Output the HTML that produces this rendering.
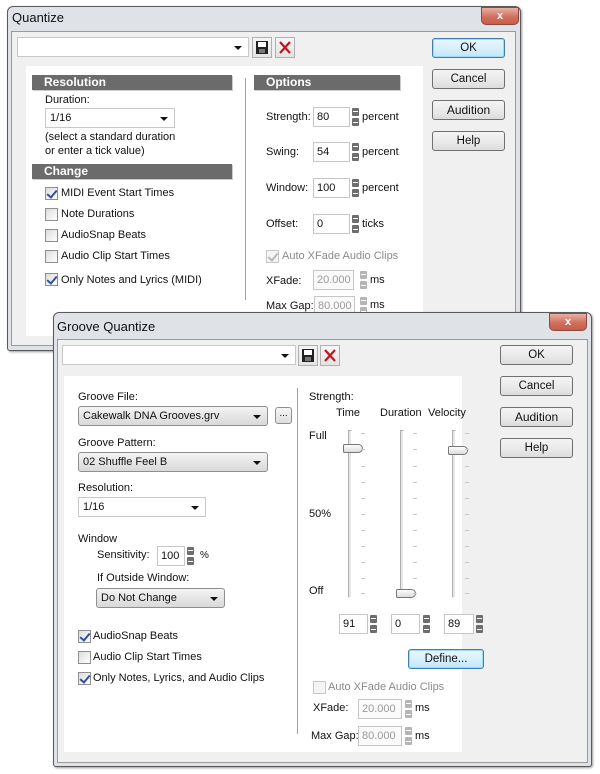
<!DOCTYPE html>
<html><head><meta charset="utf-8"><style>
*{margin:0;padding:0;box-sizing:border-box}
body{width:600px;height:774px;background:#fff;position:relative;overflow:hidden;font-family:"Liberation Sans",Arial,sans-serif;font-size:11px;color:#111}
.a{position:absolute}
.t{position:absolute;line-height:14px;white-space:nowrap}
.win{position:absolute;background:#dfe2e6;border:1px solid #5a5a5a;border-radius:6px 6px 3px 3px;box-shadow:1px 1px 2px rgba(0,0,0,.4)}
.title{position:absolute;font-size:13px;color:#111}
.body{position:absolute;background:#f0f0f0;border:1px solid #9a9a9a}
.panel{position:absolute;background:#fff}
.close{position:absolute;width:38px;height:18px;border:1px solid #8a4a40;border-radius:0 0 5px 5px;background:linear-gradient(#eab0a4,#d0705e 55%,#c75d48);color:#fff;font-size:11px;font-weight:bold;text-align:center;line-height:16px}
.combo{position:absolute;background:#fff;border:1px solid #c8c8c8;height:20px}
.combo .arr,.dd .arr{position:absolute;right:6px;top:8px;width:0;height:0;border-left:4px solid transparent;border-right:4px solid transparent;border-top:4px solid #111}
.dd{position:absolute;height:20px;border:1px solid #8e8f8f;border-radius:3px;background:linear-gradient(#f4f4f4,#e6e6e6 50%,#d9d9d9)}
.dd span,.combo span{position:absolute;left:4px;top:2px;line-height:14px}
.btn{position:absolute;height:20px;border:1px solid #707070;border-radius:3px;background:linear-gradient(#f4f4f4,#ebebeb 50%,#dcdcdc);text-align:center;line-height:18px;font-size:11.5px}
.btn.def{border-color:#3c7fb1;background:linear-gradient(#eaf6fd,#d9f0fc 50%,#bee6fd);box-shadow:inset 0 0 0 1px #9fd9f5}
.hdr{position:absolute;background:#6b6b6b;color:#fff;font-weight:bold;font-size:12px;line-height:15px;height:15px;padding-left:12px;box-shadow:1px 1px 0 #ccc}
.cb{position:absolute;width:13px;height:13px;border:1px solid #8f8f8f;background:linear-gradient(135deg,#dcdcdc,#fff)}
.cb.on::after{content:"";position:absolute;left:3px;top:0px;width:4px;height:8px;border:solid #3050a0;border-width:0 2px 2px 0;transform:rotate(40deg)}
.cb.dis{border-color:#c8c8c8;background:#f4f4f4}
.cb.dis.on::after{border-color:#b8b8b8}
.inp{position:absolute;height:20px;border:1px solid #c6c6c6;background:#fff;padding-left:3px;line-height:18px}
.inp.dis{color:#9a9a9a;background:#fafafa}
.spin{position:absolute;width:7px;height:18px}
.spin::before{content:"";position:absolute;left:0;top:0;width:7px;height:8px;background:#6e6e6e;border-radius:1px}
.spin::after{content:"";position:absolute;left:0;top:10px;width:7px;height:8px;background:#6e6e6e;border-radius:1px}
.spin i{position:absolute;left:1px;width:5px;height:1px;background:#fff;z-index:2}
.spin.dis::before,.spin.dis::after{background:#b5b5b5}
.vl{position:absolute;width:2px;border-left:1px solid #a0a0a0;border-right:1px solid #fff}
.track{position:absolute;width:4px;border:1px solid #b0b0b0;border-right-color:#fff;border-bottom-color:#fff;background:#e6e6e6}
.thumb{position:absolute;width:20px;height:9px;border:1px solid #777;border-radius:2px 5px 5px 2px;background:linear-gradient(#fdfdfd,#dcdcdc)}
.tick{position:absolute;width:4px;height:1px;background:#c8c8c8}
.ico{position:absolute;width:20px;height:21px;border:1px solid #b0b0b0;background:linear-gradient(#f6f6f6,#e4e4e4)}
</style></head><body>

<!-- ================= Quantize ================= -->
<div class="win" style="left:7px;top:6px;width:514px;height:345px"></div>
<div class="title" style="left:12px;top:10px">Quantize</div>
<div class="close" style="left:481px;top:7px">x</div>
<div class="body" style="left:11px;top:31px;width:505px;height:315px"></div>
<div class="panel" style="left:26px;top:66px;width:397px;height:270px"></div>

<div class="combo" style="left:17px;top:37px;width:232px"><div class="arr"></div></div>
<div class="ico" style="left:252px;top:37px"><svg width="18" height="19" viewBox="0 0 18 19"><rect x="3" y="3" width="12" height="13" fill="#222"/><rect x="5" y="4" width="8" height="5" fill="#fff"/><rect x="6" y="11" width="6" height="4" fill="#777"/></svg></div>
<div class="ico" style="left:275px;top:37px"><svg width="18" height="19" viewBox="0 0 18 19"><path d="M4 4L14 15M14 4L4 15" stroke="#c0141c" stroke-width="2.2"/></svg></div>

<div class="btn def" style="left:432px;top:38px;width:73px">OK</div>
<div class="btn" style="left:432px;top:69px;width:73px">Cancel</div>
<div class="btn" style="left:432px;top:100px;width:73px;font-size:12px">Audition</div>
<div class="btn" style="left:432px;top:131px;width:73px">Help</div>

<div class="hdr" style="left:32px;top:75px;width:200px">Resolution</div>
<div class="hdr" style="left:254px;top:75px;width:146px">Options</div>
<div class="vl" style="left:245px;top:78px;height:222px"></div>

<div class="t" style="left:45px;top:93px">Duration:</div>
<div class="combo" style="left:45px;top:108px;width:130px"><span>1/16</span><div class="arr"></div></div>
<div class="t" style="left:45px;top:130px">(select a standard duration</div>
<div class="t" style="left:45px;top:144px">or enter a tick value)</div>
<div class="hdr" style="left:32px;top:164px;width:200px">Change</div>
<div class="cb on" style="left:45px;top:187px"></div><div class="t" style="left:61px;top:186px">MIDI Event Start Times</div>
<div class="cb" style="left:45px;top:208px"></div><div class="t" style="left:61px;top:207px">Note Durations</div>
<div class="cb" style="left:45px;top:229px"></div><div class="t" style="left:61px;top:228px">AudioSnap Beats</div>
<div class="cb" style="left:45px;top:250px"></div><div class="t" style="left:61px;top:249px">Audio Clip Start Times</div>
<div class="cb on" style="left:45px;top:273px"></div><div class="t" style="left:61px;top:273px">Only Notes and Lyrics (MIDI)</div>

<div class="t" style="left:266px;top:110px">Strength:</div>
<div class="inp" style="left:313px;top:107px;width:37px">80</div><div class="spin" style="left:352px;top:108px"><i style="top:3px"></i><i style="top:14px"></i></div><div class="t" style="left:362px;top:110px">percent</div>
<div class="t" style="left:266px;top:145px">Swing:</div>
<div class="inp" style="left:313px;top:142px;width:37px">54</div><div class="spin" style="left:352px;top:143px"><i style="top:3px"></i><i style="top:14px"></i></div><div class="t" style="left:362px;top:145px">percent</div>
<div class="t" style="left:266px;top:181px">Window:</div>
<div class="inp" style="left:313px;top:178px;width:37px">100</div><div class="spin" style="left:352px;top:179px"><i style="top:3px"></i><i style="top:14px"></i></div><div class="t" style="left:362px;top:181px">percent</div>
<div class="t" style="left:266px;top:217px">Offset:</div>
<div class="inp" style="left:313px;top:214px;width:37px">0</div><div class="spin" style="left:352px;top:215px"><i style="top:3px"></i><i style="top:14px"></i></div><div class="t" style="left:362px;top:217px">ticks</div>
<div class="cb dis on" style="left:266px;top:250px"></div><div class="t" style="left:282px;top:249px;color:#8a8a8a">Auto XFade Audio Clips</div>
<div class="t" style="left:266px;top:274px">XFade:</div>
<div class="inp dis" style="left:313px;top:270px;width:41px">20.000</div><div class="spin dis" style="left:360px;top:271px"><i style="top:3px"></i><i style="top:14px"></i></div><div class="t" style="left:370px;top:273px">ms</div>
<div class="t" style="left:266px;top:299px">Max Gap:</div>
<div class="inp dis" style="left:314px;top:296px;width:41px">80.000</div><div class="spin dis" style="left:360px;top:297px"><i style="top:3px"></i><i style="top:14px"></i></div><div class="t" style="left:370px;top:298px">ms</div>

<!-- ================= Groove Quantize ================= -->
<div class="win" style="left:53px;top:312px;width:539px;height:455px"></div>
<div class="title" style="left:57px;top:319px">Groove Quantize</div>
<div class="close" style="left:549px;top:313px">x</div>
<div class="body" style="left:57px;top:339px;width:531px;height:424px"></div>
<div class="panel" style="left:64px;top:376px;width:398px;height:376px"></div>

<div class="combo" style="left:62px;top:345px;width:234px"><div class="arr"></div></div>
<div class="ico" style="left:298px;top:345px"><svg width="18" height="19" viewBox="0 0 18 19"><rect x="3" y="3" width="12" height="13" fill="#222"/><rect x="5" y="4" width="8" height="5" fill="#fff"/><rect x="6" y="11" width="6" height="4" fill="#777"/></svg></div>
<div class="ico" style="left:320px;top:345px"><svg width="18" height="19" viewBox="0 0 18 19"><path d="M4 4L14 15M14 4L4 15" stroke="#c0141c" stroke-width="2.2"/></svg></div>

<div class="btn" style="left:500px;top:345px;width:73px">OK</div>
<div class="btn" style="left:500px;top:376px;width:73px">Cancel</div>
<div class="btn" style="left:500px;top:407px;width:73px;font-size:12px">Audition</div>
<div class="btn" style="left:500px;top:438px;width:73px">Help</div>

<div class="vl" style="left:297px;top:388px;height:346px"></div>

<div class="t" style="left:78px;top:390px">Groove File:</div>
<div class="dd" style="left:78px;top:406px;width:190px"><span>Cakewalk DNA Grooves.grv</span><div class="arr"></div></div>
<div class="btn" style="left:275px;top:407px;width:17px;height:17px;line-height:12px;font-size:10px;border-color:#8e8f8f">...</div>
<div class="t" style="left:78px;top:436px">Groove Pattern:</div>
<div class="dd" style="left:78px;top:452px;width:190px"><span>02 Shuffle Feel B</span><div class="arr"></div></div>
<div class="t" style="left:78px;top:481px">Resolution:</div>
<div class="combo" style="left:78px;top:497px;width:128px"><span>1/16</span><div class="arr"></div></div>
<div class="t" style="left:78px;top:532px">Window</div>
<div class="t" style="left:97px;top:548px">Sensitivity:</div>
<div class="inp" style="left:157px;top:546px;width:28px">100</div><div class="spin" style="left:187px;top:547px"><i style="top:3px"></i><i style="top:14px"></i></div><div class="t" style="left:200px;top:549px;font-size:10px">%</div>
<div class="t" style="left:97px;top:571px">If Outside Window:</div>
<div class="dd" style="left:96px;top:588px;width:129px"><span>Do Not Change</span><div class="arr"></div></div>
<div class="cb on" style="left:78px;top:630px"></div><div class="t" style="left:93px;top:629px">AudioSnap Beats</div>
<div class="cb" style="left:78px;top:651px"></div><div class="t" style="left:93px;top:650px">Audio Clip Start Times</div>
<div class="cb on" style="left:78px;top:672px"></div><div class="t" style="left:93px;top:671px">Only Notes, Lyrics, and Audio Clips</div>

<div class="t" style="left:309px;top:390px">Strength:</div>
<div class="t" style="left:336px;top:406px">Time</div>
<div class="t" style="left:380px;top:406px">Duration</div>
<div class="t" style="left:428px;top:406px">Velocity</div>
<div class="t" style="left:309px;top:429px">Full</div>
<div class="t" style="left:309px;top:507px">50%</div>
<div class="t" style="left:309px;top:584px">Off</div>

<div class="track" style="left:348px;top:430px;height:168px"></div>
<div class="track" style="left:400px;top:430px;height:168px"></div>
<div class="track" style="left:452px;top:430px;height:168px"></div>
<div class="thumb" style="left:343px;top:444px"></div>
<div class="thumb" style="left:396px;top:589px"></div>
<div class="thumb" style="left:448px;top:446px"></div>

<div class="inp" style="left:339px;top:614px;width:29px">91</div><div class="spin" style="left:370px;top:615px"><i style="top:3px"></i><i style="top:14px"></i></div>
<div class="inp" style="left:391px;top:614px;width:29px">0</div><div class="spin" style="left:423px;top:615px"><i style="top:3px"></i><i style="top:14px"></i></div>
<div class="inp" style="left:444px;top:614px;width:30px">89</div><div class="spin" style="left:476px;top:615px"><i style="top:3px"></i><i style="top:14px"></i></div>

<div class="btn def" style="left:408px;top:649px;width:76px">Define...</div>
<div class="cb dis" style="left:313px;top:681px"></div><div class="t" style="left:328px;top:680px;color:#8a8a8a">Auto XFade Audio Clips</div>
<div class="t" style="left:313px;top:701px">XFade:</div>
<div class="inp dis" style="left:358px;top:699px;width:44px">20.000</div><div class="spin dis" style="left:405px;top:700px"><i style="top:3px"></i><i style="top:14px"></i></div><div class="t" style="left:415px;top:701px">ms</div>
<div class="t" style="left:311px;top:729px">Max Gap:</div>
<div class="inp dis" style="left:358px;top:726px;width:44px">80.000</div><div class="spin dis" style="left:405px;top:727px"><i style="top:3px"></i><i style="top:14px"></i></div><div class="t" style="left:415px;top:729px">ms</div>

<!-- ticks -->
<div class="tick" style="left:361px;top:433px"></div><div class="tick" style="left:413px;top:433px"></div><div class="tick" style="left:465px;top:433px"></div>
<div class="tick" style="left:361px;top:449px"></div><div class="tick" style="left:413px;top:449px"></div><div class="tick" style="left:465px;top:449px"></div>
<div class="tick" style="left:361px;top:466px"></div><div class="tick" style="left:413px;top:466px"></div><div class="tick" style="left:465px;top:466px"></div>
<div class="tick" style="left:361px;top:482px"></div><div class="tick" style="left:413px;top:482px"></div><div class="tick" style="left:465px;top:482px"></div>
<div class="tick" style="left:361px;top:498px"></div><div class="tick" style="left:413px;top:498px"></div><div class="tick" style="left:465px;top:498px"></div>
<div class="tick" style="left:361px;top:514px"></div><div class="tick" style="left:413px;top:514px"></div><div class="tick" style="left:465px;top:514px"></div>
<div class="tick" style="left:361px;top:530px"></div><div class="tick" style="left:413px;top:530px"></div><div class="tick" style="left:465px;top:530px"></div>
<div class="tick" style="left:361px;top:546px"></div><div class="tick" style="left:413px;top:546px"></div><div class="tick" style="left:465px;top:546px"></div>
<div class="tick" style="left:361px;top:562px"></div><div class="tick" style="left:413px;top:562px"></div><div class="tick" style="left:465px;top:562px"></div>
<div class="tick" style="left:361px;top:578px"></div><div class="tick" style="left:413px;top:578px"></div><div class="tick" style="left:465px;top:578px"></div>
<div class="tick" style="left:361px;top:593px"></div><div class="tick" style="left:413px;top:593px"></div><div class="tick" style="left:465px;top:593px"></div>
</body></html>
